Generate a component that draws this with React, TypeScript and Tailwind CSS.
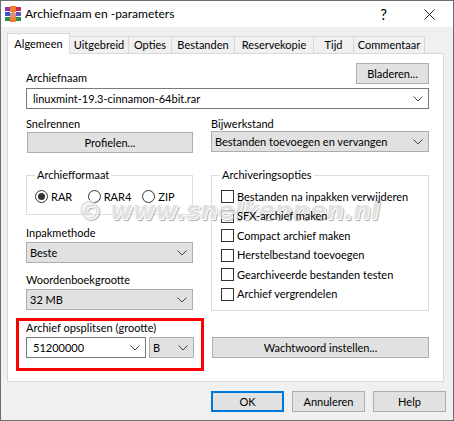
import type { ReactNode } from "react";

const chevron = (
  <svg width="10" height="6" viewBox="0 0 10 6" className="shrink-0">
    <path d="M.5.5 5 5 9.5.5" fill="none" stroke="#444" strokeWidth="1" />
  </svg>
);

function Logo() {
  return (
    <svg width="16" height="16" viewBox="0 0 16 16" className="shrink-0">
      <rect x="0" y="1" width="5" height="4" fill="#8a3a9c" />
      <rect x="0" y="6" width="5" height="4" fill="#3a55c8" />
      <rect x="0" y="11" width="5" height="4" fill="#2f8f4a" />
      <rect x="11" y="1" width="5" height="4" fill="#c8285a" />
      <rect x="11" y="6" width="5" height="4" fill="#5a55c0" />
      <rect x="11" y="11" width="5" height="4" fill="#2f8f4a" />
      <rect x="5" y="0" width="6" height="16" fill="#f08030" />
      <rect x="5" y="6" width="6" height="5" fill="#f5f0e8" />
      <path d="M6 11V7M8 11V6M10 11V7" stroke="#c03020" strokeWidth="1" />
    </svg>
  );
}

function Tab({ label, width, active }: { label: string; width: string; active?: boolean }) {
  if (active) {
    return (
      <div className={`${width} relative z-10 -mb-px flex h-[21px] items-center justify-center border border-b-0 border-[#d9d9d9] bg-white`}>
        {label}
      </div>
    );
  }
  return (
    <div className={`${width} -ml-px mt-[3px] flex h-[17px] items-center justify-center border border-b-0 border-[#d9d9d9] bg-[#f0f0f0]`}>
      {label}
    </div>
  );
}

function Combo({ value, width, editable }: { value: string; width: string; editable?: boolean }) {
  return (
    <div
      className={`${width} flex h-[21px] items-center justify-between pr-[5px] border ${
        editable ? "border-[#7a7a7a] bg-white pl-1.5" : "border-[#adadad] bg-[#e1e1e1] pl-[3px]"
      }`}
    >
      <span>{value}</span>
      {chevron}
    </div>
  );
}

function Button({ children, className }: { children: ReactNode; className: string }) {
  return (
    <div className={`${className} flex items-center justify-center border border-[#adadad] bg-[#e1e1e1]`}>
      {children}
    </div>
  );
}

function Radio({ label, checked, width }: { label: string; checked?: boolean; width: string }) {
  return (
    <div className={`${width} flex items-center gap-[3px]`}>
      <span className="flex size-[13px] items-center justify-center rounded-full border border-[#333] bg-white">
        {checked && <span className="size-[7px] rounded-full bg-[#333]" />}
      </span>
      <span className="relative z-10">{label}</span>
    </div>
  );
}

function Check({ label }: { label: string }) {
  return (
    <div className="flex h-[13px] items-center gap-[3px] whitespace-nowrap">
      <span className="size-[13px] shrink-0 border border-[#333] bg-white" />
      <span className="relative z-10">{label}</span>
    </div>
  );
}

function Group({ title, className, children }: { title: string; className: string; children: ReactNode }) {
  return (
    <div className={`${className} relative border border-[#dcdcdc]`}>
      <span className="absolute -top-[9px] left-2 bg-white px-0.5">{title}</span>
      {children}
    </div>
  );
}

export default function App() {
  return (
    <div
      className="relative flex h-[421px] w-[454px] flex-col overflow-hidden border border-[#6d6d6d] bg-[#f0f0f0] text-[11px] leading-4 text-black"
      style={{ fontFamily: "Lato, sans-serif" }}
    >
      <div className="flex h-[26px] shrink-0 items-center bg-white pl-1">
        <Logo />
        <span className="ml-1 text-[12px]">Archiefnaam en -parameters</span>
        <span className="ml-auto mr-[37px] text-[15px]">?</span>
        <svg width="11" height="11" viewBox="0 0 11 11" className="mr-[18px]">
          <path d="M.5.5l10 10M10.5.5l-10 10" stroke="#222" strokeWidth="1" />
        </svg>
      </div>

      <div className="ml-[6px] mt-[6px] flex">
        <Tab label="Algemeen" width="w-[63px]" active />
        <Tab label="Uitgebreid" width="w-[60px]" />
        <Tab label="Opties" width="w-[44px]" />
        <Tab label="Bestanden" width="w-[64px]" />
        <Tab label="Reservekopie" width="w-[80px]" />
        <Tab label="Tijd" width="w-[41px]" />
        <Tab label="Commentaar" width="w-[72px]" />
      </div>

      <div className="ml-[6px] flex h-[329px] w-[437px] flex-col border border-[#d9d9d9] bg-white pl-[18px] pr-[14px] pt-[9px]">
        <div className="flex h-[21px] items-end justify-between">
          <span className="mb-[-2px]">Archiefnaam</span>
          <Button className="h-[21px] w-[73px]">Bladeren...</Button>
        </div>
        <div className="mt-[4px]">
          <Combo value="linuxmint-19.3-cinnamon-64bit.rar" width="w-[403px]" editable />
        </div>

        <div className="mt-[7px] grid grid-cols-[167px_218px] gap-x-[18px]">
          <div>
            <div className="h-4">Snelrennen</div>
            <Button className="ml-px h-[21px] w-[166px]">Profielen...</Button>
            <Group title="Archiefformaat" className="mt-[22px] flex h-[40px] items-center pl-2 pt-[3px]">
              <Radio label="RAR" checked width="w-[53px]" />
              <Radio label="RAR4" width="w-[55px]" />
              <Radio label="ZIP" width="w-[50px]" />
            </Group>
            <div className="mt-[10px] h-4">Inpakmethode</div>
            <div className="mt-[1px]">
              <Combo value="Beste" width="w-[167px]" />
            </div>
            <div className="mt-[9px] h-4">Woordenboekgrootte</div>
            <div className="mt-[1px]">
              <Combo value="32 MB" width="w-[167px]" />
            </div>
          </div>

          <div>
            <div className="h-[15px]">Bijwerkstand</div>
            <Combo value="Bestanden toevoegen en vervangen" width="w-[218px]" />
            <Group title="Archiveringsopties" className="mt-[23px] flex h-[136px] flex-col gap-[6.5px] pl-[9px] pt-[14px]">
              <Check label="Bestanden na inpakken verwijderen" />
              <Check label="SFX-archief maken" />
              <Check label="Compact archief maken" />
              <Check label="Herstelbestand toevoegen" />
              <Check label="Gearchiveerde bestanden testen" />
              <Check label="Archief vergrendelen" />
            </Group>
          </div>
        </div>

        <div className="mt-[7px] flex items-start">
          <div className="-ml-[10px] h-[53px] w-[188px] border-[3px] border-[#fe0000] pl-[7px]">
            <div className="h-4 leading-[14px]">Archief opsplitsen (grootte)</div>
            <div className="flex gap-[3px]">
              <Combo value="51200000" width="w-[120px]" editable />
              <Combo value="B" width="w-[45px]" />
            </div>
          </div>
          <Button className="ml-[8px] mt-[19px] h-[21px] w-[217px]">Wachtwoord instellen...</Button>
        </div>
      </div>

      <div className="mt-[9px] flex justify-end gap-2 pr-[7px]">
        <div className="flex h-[21px] w-[73px] items-center justify-center border-2 border-[#0078d7] bg-[#e1e1e1]">OK</div>
        <Button className="h-[21px] w-[73px]">Annuleren</Button>
        <Button className="h-[21px] w-[73px]">Help</Button>
      </div>

      <div
        className="pointer-events-none absolute left-[76px] top-[192px] whitespace-nowrap text-[24.5px] font-bold italic leading-9 text-[#dcdcdc] opacity-80"
        style={{ fontFamily: '"DejaVu Sans", sans-serif', textShadow: "1px 1px 0 #fff, -1px -1px 0 #fff, 2px 2px 1px #999" }}
      >
        © www.snelkennen.nl
      </div>
    </div>
  );
}
